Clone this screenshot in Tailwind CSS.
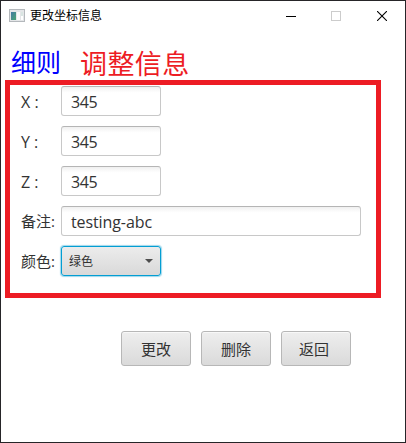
<!DOCTYPE html>
<html lang="zh-CN">
<head>
<meta charset="utf-8">
<title>更改坐标信息</title>
<script src="https://cdn.jsdelivr.net/npm/@tailwindcss/browser@4"></script>
</head>
<body class="w-[406px] h-[443px] overflow-hidden bg-white font-['Open_Sans','Noto_Sans_CJK_SC',sans-serif] text-[15px] text-[#333]">
<div class="flex flex-col w-[406px] h-[443px] border border-[#262528] bg-white">
  <header class="flex items-center h-[29px] shrink-0 pl-2">
    <svg class="w-[16px] h-[13px] shrink-0" viewBox="0 0 16 13" shape-rendering="crispEdges">
      <defs><linearGradient id="g" x1="0" y1="0" x2="1" y2="1"><stop offset="0" stop-color="#4379a4"/><stop offset="1" stop-color="#4aa572"/></linearGradient></defs>
      <rect x=".5" y=".5" width="15" height="12" fill="#e4e6e8" stroke="#b4b8bc"/>
      <rect x="2" y="3" width="5" height="8" fill="url(#g)"/>
      <rect x="8" y="3" width="3" height="8" fill="#fafafa"/>
      <rect x="12" y="3" width="2" height="4" fill="#d9e5e2"/>
      <rect x="12" y="7" width="2" height="4" fill="#fff"/>
    </svg>
    <h1 class="ml-[5px] text-[12px] leading-[28px] text-black grow">更改坐标信息</h1>
    <div class="flex items-center text-black pr-[18px]">
      <svg class="w-[10px] h-[10px] mr-[35px]" viewBox="0 0 10 10"><path d="M0 5.5H10" stroke="currentColor"/></svg>
      <svg class="w-[10px] h-[10px] mr-[36px]" viewBox="0 0 10 10"><rect x=".5" y=".5" width="9" height="9" fill="none" stroke="#ccc"/></svg>
      <svg class="w-[10px] h-[10px]" viewBox="0 0 10 10"><path d="M0 0L10 10M10 0L0 10" stroke="currentColor" stroke-width="1.1"/></svg>
    </div>
  </header>
  <div class="flex h-[50px] shrink-0 pl-[10px] pt-[14px] gap-[19px] whitespace-nowrap">
    <span class="text-[25px] leading-[36px] text-[#00f]">细则</span>
    <span class="text-[27px] leading-[40px] tracking-[0.4px] text-[#ed1c24]">调整信息</span>
  </div>
  <main class="ml-[4px] w-[376px] h-[218px] shrink-0 border-[5px] border-[#ed1c24] pl-[11px] pt-px flex flex-col gap-[10px]">
    <div class="flex items-center h-[30px]"><label class="w-[40px] whitespace-pre text-[16px] pt-[2px]">X :</label><div class="w-[100px] h-[30px] rounded-[3px] border border-[#c8c8c8] border-t-[#b5b5b5] bg-linear-to-b from-[#f0f0f0] to-white to-20% pl-[9px] leading-[28px] pt-px text-[16px] tracking-[-0.4px]">345</div></div>
    <div class="flex items-center h-[30px]"><label class="w-[40px] whitespace-pre text-[16px] pt-[2px]">Y :</label><div class="w-[100px] h-[30px] rounded-[3px] border border-[#c8c8c8] border-t-[#b5b5b5] bg-linear-to-b from-[#f0f0f0] to-white to-20% pl-[9px] leading-[28px] pt-px text-[16px] tracking-[-0.4px]">345</div></div>
    <div class="flex items-center h-[30px]"><label class="w-[40px] whitespace-pre text-[16px] pt-[2px]">Z :</label><div class="w-[100px] h-[30px] rounded-[3px] border border-[#c8c8c8] border-t-[#b5b5b5] bg-linear-to-b from-[#f0f0f0] to-white to-20% pl-[9px] leading-[28px] pt-px text-[16px] tracking-[-0.4px]">345</div></div>
    <div class="flex items-center h-[30px]"><label class="w-[40px] whitespace-nowrap">备注:</label><div class="w-[300px] h-[30px] rounded-[3px] border border-[#c8c8c8] border-t-[#b5b5b5] bg-linear-to-b from-[#f0f0f0] to-white to-20% pl-[9px] leading-[28px] pt-px text-[16px] tracking-[-0.1px]">testing-abc</div></div>
    <div class="flex items-center h-[30px]"><label class="w-[40px] whitespace-nowrap">颜色:</label>
      <div class="flex items-center justify-between w-[100px] h-[30px] rounded-[3px] border border-[#039ed3] shadow-[0_0_1px_1px_#9fd8ec] bg-linear-to-b from-[#ececec] to-[#d9d9d9] pl-[7px] pr-[7px] text-[12px] leading-[28px]"><span class="pt-px">绿色</span>
        <svg class="w-[8px] h-[4px]" viewBox="0 0 8 4"><path d="M0 0H8L4 4Z" fill="#4d4d4d"/></svg>
      </div>
    </div>
  </main>
  <footer class="flex gap-[10px] pl-[120px] pt-[33px]">
    <button class="w-[70px] h-[35px] rounded-[3px] border border-[#b7b7b7] bg-linear-to-b from-[#eeeeee] to-[#dadada] shadow-[inset_0_1px_0_#f8f8f8] leading-[33px] pt-px">更改</button>
    <button class="w-[70px] h-[35px] rounded-[3px] border border-[#b7b7b7] bg-linear-to-b from-[#eeeeee] to-[#dadada] shadow-[inset_0_1px_0_#f8f8f8] leading-[33px] pt-px">删除</button>
    <button class="w-[70px] h-[35px] rounded-[3px] border border-[#b7b7b7] bg-linear-to-b from-[#eeeeee] to-[#dadada] shadow-[inset_0_1px_0_#f8f8f8] leading-[33px] pt-px pr-[4px]">返回</button>
  </footer>
</div>
</body>
</html>
